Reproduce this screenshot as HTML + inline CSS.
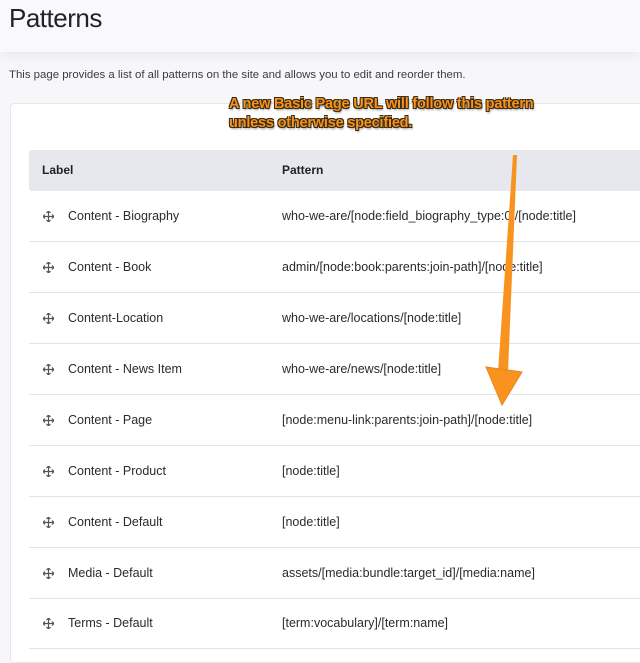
<!DOCTYPE html>
<html><head><meta charset="utf-8"><style>
*{margin:0;padding:0;box-sizing:border-box}
body{width:640px;height:650px;overflow:hidden;background:#f7f7fa;font-family:"Liberation Sans",sans-serif;color:#232429;position:relative}
.hdr{position:absolute;left:0;top:0;width:640px;height:52px;background:#f9f9fc;box-shadow:0 4px 10px rgba(0,0,0,.06)}
h1{position:absolute;left:9px;top:3px;font-size:26px;font-weight:normal;letter-spacing:-0.5px;color:#22222b}
.desc{position:absolute;left:9px;top:69px;font-size:11.4px;color:#3b3b44}
.card{position:absolute;left:10px;top:103px;width:650px;height:560px;background:#fff;border:1px solid #e6e7ec;border-radius:4px}
.th{position:absolute;left:29px;top:150px;width:620px;height:41px;background:#e6e8ee;border-radius:3px;font-size:12px;font-weight:bold;color:#222}
.th span{position:absolute;top:13px}
.row{position:absolute;left:29px;width:620px;height:51px;border-bottom:1px solid #e3e4e8;font-size:12.5px;color:#2a2a30}
.row span{position:absolute;top:18px}
.ic{position:absolute;left:14px;top:20px;width:11px;height:11px}
.note{position:absolute;left:229px;top:95px;font-size:14.5px;font-weight:bold;color:#f7931e;letter-spacing:-0.2px;line-height:19px;text-shadow:-1px -1px 0 #3a2a10,1px -1px 0 #3a2a10,-1px 1px 0 #3a2a10,1px 1px 0 #3a2a10,1px 2px 2px rgba(0,0,0,.5)}
</style></head><body>
<div class="hdr"></div>
<h1>Patterns</h1>
<div class="desc">This page provides a list of all patterns on the site and allows you to edit and reorder them.</div>
<div class="card"></div>
<div class="th"><span style="left:13px">Label</span><span style="left:253px">Pattern</span></div>

<div class="row" style="top:191px"><svg class="ic" viewBox="0 0 11 11"><path d="M5.5 0v11M0 5.5h11M3.5 2l2-2 2 2M3.5 9l2 2 2-2M2 3.5l-2 2 2 2M9 3.5l2 2-2 2" stroke="#555" stroke-width="1.2" fill="none"/></svg><span style="left:39px">Content - Biography</span><span style="left:253px">who-we-are/[node:field_biography_type:0]/[node:title]</span></div>
<div class="row" style="top:242px"><svg class="ic" viewBox="0 0 11 11"><path d="M5.5 0v11M0 5.5h11M3.5 2l2-2 2 2M3.5 9l2 2 2-2M2 3.5l-2 2 2 2M9 3.5l2 2-2 2" stroke="#555" stroke-width="1.2" fill="none"/></svg><span style="left:39px">Content - Book</span><span style="left:253px">admin/[node:book:parents:join-path]/[node:title]</span></div>
<div class="row" style="top:293px"><svg class="ic" viewBox="0 0 11 11"><path d="M5.5 0v11M0 5.5h11M3.5 2l2-2 2 2M3.5 9l2 2 2-2M2 3.5l-2 2 2 2M9 3.5l2 2-2 2" stroke="#555" stroke-width="1.2" fill="none"/></svg><span style="left:39px">Content-Location</span><span style="left:253px">who-we-are/locations/[node:title]</span></div>
<div class="row" style="top:344px"><svg class="ic" viewBox="0 0 11 11"><path d="M5.5 0v11M0 5.5h11M3.5 2l2-2 2 2M3.5 9l2 2 2-2M2 3.5l-2 2 2 2M9 3.5l2 2-2 2" stroke="#555" stroke-width="1.2" fill="none"/></svg><span style="left:39px">Content - News Item</span><span style="left:253px">who-we-are/news/[node:title]</span></div>
<div class="row" style="top:395px"><svg class="ic" viewBox="0 0 11 11"><path d="M5.5 0v11M0 5.5h11M3.5 2l2-2 2 2M3.5 9l2 2 2-2M2 3.5l-2 2 2 2M9 3.5l2 2-2 2" stroke="#555" stroke-width="1.2" fill="none"/></svg><span style="left:39px">Content - Page</span><span style="left:253px">[node:menu-link:parents:join-path]/[node:title]</span></div>
<div class="row" style="top:446px"><svg class="ic" viewBox="0 0 11 11"><path d="M5.5 0v11M0 5.5h11M3.5 2l2-2 2 2M3.5 9l2 2 2-2M2 3.5l-2 2 2 2M9 3.5l2 2-2 2" stroke="#555" stroke-width="1.2" fill="none"/></svg><span style="left:39px">Content - Product</span><span style="left:253px">[node:title]</span></div>
<div class="row" style="top:497px"><svg class="ic" viewBox="0 0 11 11"><path d="M5.5 0v11M0 5.5h11M3.5 2l2-2 2 2M3.5 9l2 2 2-2M2 3.5l-2 2 2 2M9 3.5l2 2-2 2" stroke="#555" stroke-width="1.2" fill="none"/></svg><span style="left:39px">Content - Default</span><span style="left:253px">[node:title]</span></div>
<div class="row" style="top:548px"><svg class="ic" viewBox="0 0 11 11"><path d="M5.5 0v11M0 5.5h11M3.5 2l2-2 2 2M3.5 9l2 2 2-2M2 3.5l-2 2 2 2M9 3.5l2 2-2 2" stroke="#555" stroke-width="1.2" fill="none"/></svg><span style="left:39px">Media - Default</span><span style="left:253px">assets/[media:bundle:target_id]/[media:name]</span></div>
<div class="row" style="top:598px"><svg class="ic" viewBox="0 0 11 11"><path d="M5.5 0v11M0 5.5h11M3.5 2l2-2 2 2M3.5 9l2 2 2-2M2 3.5l-2 2 2 2M9 3.5l2 2-2 2" stroke="#555" stroke-width="1.2" fill="none"/></svg><span style="left:39px">Terms - Default</span><span style="left:253px">[term:vocabulary]/[term:name]</span></div>

<div class="note">A new Basic Page URL will follow this pattern<br>unless otherwise specified.</div>
<svg style="position:absolute;left:0;top:0" width="640" height="650">
<polygon points="513,155 517,155 508,372 498,372" fill="#f7931e"/>
<polygon points="486,367 522,372 502,405" fill="#f7931e" stroke="#e8861a" stroke-width="1"/>
</svg>
</body></html>
